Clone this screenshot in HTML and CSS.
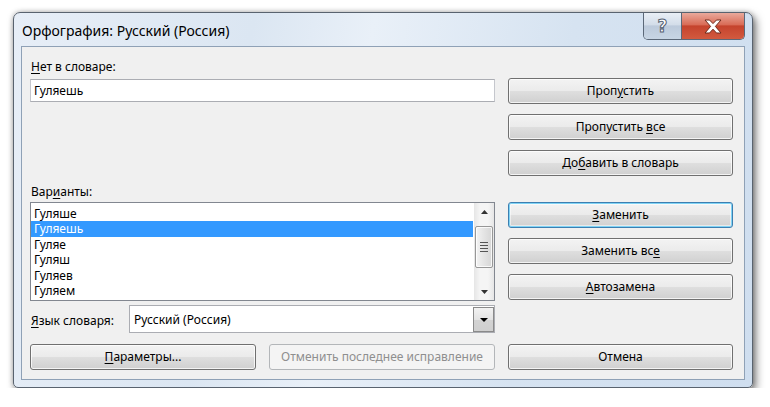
FILE: index.html
```html
<!DOCTYPE html>
<html lang="ru">
<head>
    <meta charset="UTF-8">
    <title>Орфография: Русский (Россия)</title>
    <link rel="stylesheet" href="styles.css">
</head>
<body>
    <div class="window">
        <div class="titlebar">
            <div class="title">Орфография: Русский (Россия)</div>
            <div class="caption-btns">
                <div class="cap help">?</div>
                <div class="cap close">
                    <svg width="20" height="15" viewBox="0 0 20 15">
                        <path d="M2 1h4.5l3.5 3.6L13.5 1H18l-5.6 6.4L18 14h-4.5L10 10.2 6.5 14H2l5.6-6.6z" fill="#fff" stroke="#6e2a1c" stroke-width="1" stroke-linejoin="round"/>
                    </svg>
                </div>
            </div>
        </div>

        <div class="client">
            <div class="main">
                <div class="left">
                    <div class="label"><u>Н</u>ет в словаре:</div>
                    <div class="textbox">Гуляешь</div>

                    <div class="label variants">Вар<u>и</u>анты:</div>
                    <div class="listbox">
                        <ul class="items">
                            <li>Гуляше</li>
                            <li class="selected">Гуляешь</li>
                            <li>Гуляе</li>
                            <li>Гуляш</li>
                            <li>Гуляев</li>
                            <li>Гуляем</li>
                        </ul>
                        <div class="scrollbar">
                            <div class="arrow">
                                <svg width="7" height="4" viewBox="0 0 7 4"><path d="M0 4L3.5 0L7 4z" fill="#333"/></svg>
                            </div>
                            <div class="track">
                                <div class="thumb">
                                    <span></span><span></span><span></span><span></span>
                                </div>
                            </div>
                            <div class="arrow">
                                <svg width="7" height="4" viewBox="0 0 7 4"><path d="M0 0L7 0L3.5 4z" fill="#333"/></svg>
                            </div>
                        </div>
                    </div>

                    <div class="lang-row">
                        <span class="lang-label"><u>Я</u>зык словаря:</span>
                        <div class="combo">
                            <span class="combo-text">Русский (Россия)</span>
                            <span class="drop">
                                <svg width="8" height="4" viewBox="0 0 8 4"><path d="M0 0L8 0L4 4z" fill="#000"/></svg>
                            </span>
                        </div>
                    </div>
                </div>

                <div class="right">
                    <div class="btn first"><span>Проп<u>у</u>стить</span></div>
                    <div class="btn"><span>Пропустить <u>в</u>се</span></div>
                    <div class="btn"><span>До<u>б</u>авить в словарь</span></div>
                    <div class="btn default group2"><span><u>З</u>аменить</span></div>
                    <div class="btn"><span>Заменить вс<u>е</u></span></div>
                    <div class="btn"><span><u>А</u>втозамена</span></div>
                </div>
            </div>

            <div class="bottom">
                <div class="btn wide"><span><u>П</u>араметры...</span></div>
                <div class="btn wide disabled"><span>Отменить последнее исправление</span></div>
                <div class="btn"><span>Отмена</span></div>
            </div>
        </div>
    </div>
</body>
</html>
```

FILE: styles.css
```css
body {
    margin: 0;
    background: #fff;
    font-family: "Segoe UI", "Noto Sans", sans-serif;
    font-size: 12px;
    color: #000;
}
u {
    text-underline-offset: 2px;
}
.window {
    margin: 12px 0 0 13px;
    width: 740px;
    height: 376px;
    box-sizing: border-box;
    border: 1px solid #59636f;
    border-radius: 7px 7px 5px 5px;
    padding: 0 7px 7px;
    display: flex;
    flex-direction: column;
    background: linear-gradient(100deg, #e7eef7 0%, #dbe6f2 30%, #e9f0f8 45%, #d6e3f1 70%, #cfdeef 100%);
    box-shadow: 3px 4px 9px rgba(0, 0, 0, 0.5), 0 0 5px rgba(0, 0, 0, 0.25);
}
.titlebar {
    height: 33px;
    display: flex;
    justify-content: space-between;
    align-items: flex-start;
}
.title {
    font-size: 14px;
    line-height: 20px;
    padding: 8px 0 0 1px;
}
.caption-btns {
    display: flex;
    height: 26px;
    border: 1px solid #5b6878;
    border-top: none;
    border-radius: 0 0 5px 5px;
    overflow: hidden;
}
.cap {
    height: 100%;
    display: flex;
    justify-content: center;
    align-items: center;
}
.help {
    width: 37px;
    border-right: 1px solid #5b6878;
    background: linear-gradient(#e9eff6 0%, #d3dde9 45%, #bccadb 50%, #c7d5e4 100%);
    color: #fff;
    font-family: "DejaVu Sans", sans-serif;
    font-size: 17px;
    font-weight: bold;
    -webkit-text-stroke: 1px #556070;
}
.close {
    width: 62px;
    background: linear-gradient(#e9a99b 0%, #d96c57 45%, #c5432d 50%, #d25a3f 100%);
}
.client {
    flex: 1;
    background: #f0f0f0;
    border: 1px solid #8fa1b6;
    padding: 12px 11px 0 8px;
}
.main {
    display: flex;
    gap: 13px;
}
.left {
    width: 465px;
}
.label {
    line-height: 16px;
    padding-left: 1px;
}
.label.variants {
    margin-top: 82px;
}
.textbox {
    margin-top: 4px;
    height: 23px;
    box-sizing: border-box;
    border: 1px solid #abadb3;
    border-left-color: #c5c7cd;
    border-right-color: #c5c7cd;
    background: #fff;
    padding: 0 3px;
    line-height: 21px;
}
.listbox {
    margin-top: 2px;
    height: 99px;
    box-sizing: border-box;
    border: 1px solid #828790;
    background: #fff;
    display: flex;
    overflow: hidden;
}
.items {
    list-style: none;
    margin: 0 1px 0 0;
    padding: 3px 0 0;
    flex: 1;
}
.items li {
    height: 15.4px;
    line-height: 15.4px;
    padding-left: 3px;
}
.items li.selected {
    background: #3399ff;
    color: #fff;
}
.scrollbar {
    width: 20px;
    display: flex;
    flex-direction: column;
    background: linear-gradient(90deg, #e6e6e6, #f5f5f5 30%, #f5f5f5 70%, #e6e6e6);
}
.arrow {
    height: 17px;
    display: flex;
    justify-content: center;
    align-items: center;
}
.track {
    flex: 1;
}
.thumb {
    margin: 6px 1px 0;
    height: 42px;
    box-sizing: border-box;
    border: 1px solid #979797;
    border-radius: 2px;
    background: linear-gradient(90deg, #f3f3f3, #e4e4e4 50%, #d6d6d6);
    box-shadow: inset 0 0 0 1px rgba(255, 255, 255, 0.8);
    display: flex;
    flex-direction: column;
    align-items: center;
    justify-content: center;
    gap: 2px;
}
.thumb span {
    width: 8px;
    height: 1px;
    background: #555;
}
.lang-row {
    margin-top: 4px;
    display: flex;
    align-items: center;
}
.lang-label {
    width: 98px;
    padding: 2px 0 0 1px;
}
.combo {
    flex: 1;
    height: 28px;
    box-sizing: border-box;
    border: 1px solid #abadb3;
    background: #fff;
    display: flex;
    align-items: center;
}
.combo-text {
    flex: 1;
    padding: 1px 0 0 4px;
}
.drop {
    align-self: stretch;
    margin-top: 1px;
    width: 21px;
    box-sizing: border-box;
    border: 1px solid #8a8a8a;
    background: linear-gradient(#f2f2f2, #e3e3e3 50%, #d3d3d3 51%, #cfcfcf);
    display: flex;
    justify-content: center;
    align-items: center;
}
.right {
    width: 225px;
    display: flex;
    flex-direction: column;
    gap: 10px;
}
.btn {
    height: 26px;
    box-sizing: border-box;
    border: 1px solid #707070;
    border-radius: 3px;
    background: linear-gradient(#f3f3f3 0%, #ebebeb 48%, #dedede 52%, #d0d0d0 100%);
    box-shadow: inset 0 0 0 1px rgba(255, 255, 255, 0.75);
    display: flex;
    justify-content: center;
    align-items: center;
    line-height: 16px;
}
.right .btn.first {
    margin-top: 19px;
}
.right .btn.group2 {
    margin-top: 16px;
}
.btn.default {
    border-color: #3c7fb1;
    box-shadow: inset 0 0 0 1px #7fd3f5, inset 0 0 0 2px rgba(255, 255, 255, 0.5);
}
.btn.disabled {
    border-color: #b3b6b9;
    background: #f4f4f4;
    box-shadow: none;
    color: #8f8f8f;
}
.bottom {
    margin-top: 11px;
    display: flex;
    gap: 13px;
}
.bottom .btn {
    width: 225px;
}
.bottom .btn.wide {
    width: 226px;
}
```
